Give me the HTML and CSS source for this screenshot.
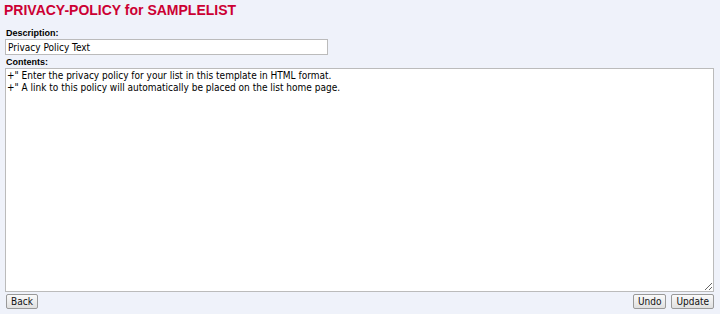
FILE: index.html
```html
<!DOCTYPE html>
<html>
<head>
<meta charset="utf-8">
<title>PRIVACY-POLICY for SAMPLELIST</title>
<link rel="stylesheet" href="styles.css">
</head>
<body>
<div class="page">
    <h1 class="title">PRIVACY-POLICY for SAMPLELIST</h1>
    <form class="form">
        <label class="label" for="desc">Description:</label>
        <input class="desc" id="desc" type="text" value="Privacy Policy Text">
        <label class="label" for="contents">Contents:</label>
        <textarea class="contents" id="contents">+" Enter the privacy policy for your list in this template in HTML format.
+" A link to this policy will automatically be placed on the list home page.</textarea>
        <div class="buttons">
            <button type="button" class="btn">Back</button>
            <div class="right">
                <button type="button" class="btn">Undo</button>
                <button type="button" class="btn">Update</button>
            </div>
        </div>
    </form>
</div>
</body>
</html>
```

FILE: styles.css
```css
body,h1,form{margin:0;padding:0;}
body{background:#eff2fa;font:11px/13px "DejaVu Sans Condensed","Liberation Sans",Arial,sans-serif;color:#000;}
.page{padding:2px 6px 0 5px;}
.title{font:bold 14px/16px "Liberation Sans",Arial,sans-serif;color:#cc0033;margin:0 0 10px -1px;}
.form{display:flex;flex-direction:column;}
.label{font:bold 9px/11px "Liberation Sans",Arial,sans-serif;display:block;height:11px;padding-left:1px;}
.desc{width:323px;height:16px;box-sizing:border-box;border:1px solid #bbb;background:#fff;font:10px "DejaVu Sans Condensed",sans-serif;padding:0 2px;margin:0 0 2px 0;outline:none;}
.contents{width:709px;height:224px;box-sizing:border-box;border:1px solid #bbb;background:#fff;font:10px/12px "DejaVu Sans Condensed",sans-serif;padding:1px 1px;margin:0;resize:both;}
.buttons{display:flex;justify-content:space-between;margin-top:2px;padding-left:1px;}
.right{display:flex;gap:5px;}
.btn{font:10px/13px "DejaVu Sans Condensed",sans-serif;color:#111;height:15px;padding:0 4px;border:1px solid #999;border-radius:2px;background:linear-gradient(#fafafa,#e0e0e0);}
```
